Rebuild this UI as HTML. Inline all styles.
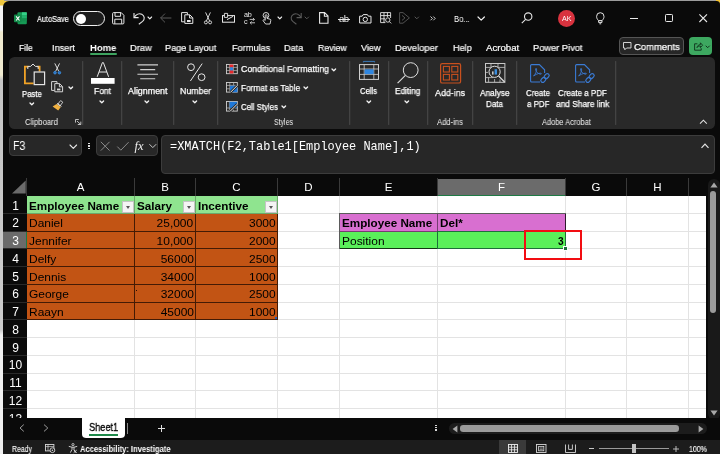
<!DOCTYPE html>
<html><head><meta charset="utf-8"><title>Excel</title>
<style>
*{box-sizing:border-box;margin:0;padding:0}
html,body{width:720px;height:454px;overflow:hidden;background:#0a0a0a}
body{position:relative;font-family:"Liberation Sans",sans-serif;color:#fff;font-size:9px}
.abs{position:absolute}
svg{overflow:visible}
.t{will-change:transform;position:absolute;white-space:nowrap;line-height:20px;transform-origin:0 0}
.box{position:absolute;background:#272727;border:1px solid #3c3c3c;border-radius:4px}
#grid{position:absolute;background:#fff;overflow:hidden}
.vl{position:absolute;top:0;width:1px;height:100%;background:#e3e3e3}
.hl{position:absolute;left:0;height:1px;width:100%;background:#e3e3e3}
.ch{will-change:transform;position:absolute;top:179px;height:17px;color:#fff;font-size:11.5px;line-height:17px;text-align:center}
.rh{will-change:transform;position:absolute;left:3px;width:25px;color:#fff;font-size:12px;line-height:18px;text-align:center}
.c{position:absolute;font-size:11.5px;line-height:18px;color:#000;white-space:nowrap;overflow:hidden;padding:0 1.5px 0 2.3px;border:1px solid rgba(25,8,0,.75);border-width:0 1px 1px 0}
.c span{will-change:transform;display:inline-block;transform-origin:0 50%;transform:scaleX(1.04)}
.c.r{text-align:right}
.c.r span{transform-origin:100% 50%}
.c.b{font-weight:bold}
.c.b span{transform:scaleX(1.015)}
.or{background:#c25414}
.gr{background:#8fe48f}
.pk{background:#d86fd0}
.lg{background:#5af05a}
.fb{position:absolute;width:12px;height:12px;background:#f4f4f4;border:1px solid #c4c4c4}
.fb i{position:absolute;left:2.5px;top:4px;border:2.5px solid transparent;border-top:3px solid #555;border-bottom:0}
</style></head><body>
<div class="abs" style="left:0;top:0;width:720px;height:454px;background:linear-gradient(#f0c840 0,#f0c840 5px,#f4f4f4 6px,#f4f4f4 30px,#f0ead0 32px,#f0ead0 75px,#c4c4c4 80px,#cccccc 330px,#f0f0f0 335px)"></div>
<div class="abs" style="left:0px;top:0px;width:720px;height:1px;background:#9c9c9c;"></div>
<div class="abs" style="left:716px;top:0px;width:4px;height:4px;background:#f0c030;"></div>
<div class="abs" style="left:0px;top:0px;width:4px;height:5px;background:#f0c840;"></div>
<div class="abs" style="left:2.6px;top:1px;width:717.4px;height:453px;background:#0a0a0a;border-top-left-radius:6px;border-top-right-radius:3.5px"></div>
<svg class="abs" style="left:13.5px;top:12px" width="13" height="12.5" viewBox="0 0 13 12.5"><rect x="3.5" y="0.3" width="9.3" height="11.9" rx="1" fill="#169a55"/>
<rect x="8" y="0.3" width="4.8" height="3" fill="#35d088"/><rect x="8" y="3.3" width="4.8" height="3" fill="#22b06c"/><rect x="8" y="6.3" width="4.8" height="3" fill="#159050"/>
<rect x="0" y="2.6" width="7.6" height="7.6" rx="0.8" fill="#138a4a"/>
<path d="M2.1 4.4 L5.5 8.5 M5.5 4.4 L2.1 8.5" stroke="#fff" stroke-width="1.1"/></svg>
<div class="t" style="left:37.00px;top:9px;font-size:8.6px;color:#fff;-webkit-text-stroke:0.2px #fff;transform:scaleX(0.851);">AutoSave</div>
<div class="abs" style="left:73px;top:11.3px;width:31.5px;height:14.5px;border:1px solid #f0f0f0;border-radius:8px;background:#1c1c1c"></div>
<div class="abs" style="left:76px;top:13.6px;width:10px;height:10px;border-radius:5px;background:#fff"></div>
<svg class="abs" style="left:112px;top:12px" width="12.5" height="12.5" viewBox="0 0 12.5 12.5"><path d="M0.6 1.6 a1 1 0 0 1 1-1 H9.2 L11.9 3.3 V10.9 a1 1 0 0 1 -1 1 H1.6 a1 1 0 0 1 -1 -1 Z" fill="none" stroke="#e8e8e8" stroke-width="1"/>
<path d="M3 0.8 V4.3 H8.6 V0.8 M2.8 11.8 V7.2 H9.7 V11.8" fill="none" stroke="#e8e8e8" stroke-width="1"/></svg>
<svg class="abs" style="left:132.5px;top:12px" width="12.5" height="12.5" viewBox="0 0 12.5 12.5"><path d="M1 1 V5.6 H5.6" fill="none" stroke="#e8e8e8" stroke-width="1.1"/><path d="M1.2 5.4 C3 2.2 6.2 1 8.8 2.2 C11.8 3.8 12 7.4 9.6 9.4 L5.8 12.2" fill="none" stroke="#e8e8e8" stroke-width="1.1"/></svg>
<svg class="abs" style="left:146.9px;top:16.3px" width="5.6" height="3.8" viewBox="0 0 5.6 3.8"><path d="M1 1 L2.8 2.8 L4.6 1" fill="none" stroke="#f0f0f0" stroke-width="1.15" stroke-linecap="round" stroke-linejoin="round"/></svg>
<svg class="abs" style="left:160px;top:13px" width="12" height="10" viewBox="0 0 12 10"><path d="M0.6 5 H11.4 M5 0.6 L0.6 5 L5 9.4" fill="none" stroke="#5a5a5a" stroke-width="1"/></svg>
<svg class="abs" style="left:180.5px;top:12.3px" width="12.5" height="12" viewBox="0 0 12.5 12"><path d="M0.6 0.6 H6.4 V2.6 M0.6 0.6 V9.8 H3.6" fill="none" stroke="#e8e8e8" stroke-width="1"/>
<path d="M3.8 2.8 H8.8 L11.8 5.8 V11.4 H3.8 Z M8.6 3 V6 H11.6" fill="none" stroke="#e8e8e8" stroke-width="1"/><path d="M6 8 H9.6 V10 H6 Z" fill="#e8e8e8"/></svg>
<svg class="abs" style="left:203.5px;top:12px" width="8" height="12.5" viewBox="0 0 8 12.5"><path d="M1.6 0.4 L5.6 9 M6.4 0.4 L2.4 9" fill="none" stroke="#e8e8e8" stroke-width="0.9"/><circle cx="1.9" cy="10.4" r="1.5" fill="none" stroke="#e8e8e8" stroke-width="0.9"/><circle cx="6.1" cy="10.4" r="1.5" fill="none" stroke="#e8e8e8" stroke-width="0.9"/></svg>
<svg class="abs" style="left:221.5px;top:12.5px" width="13" height="10" viewBox="0 0 13 10"><rect x="0.5" y="2.6" width="12" height="6.6" fill="none" stroke="#e8e8e8" stroke-width="1"/><path d="M2.4 0.4 H5.6 V4.4 H2.4 Z" fill="#0a0a0a" stroke="#e8e8e8" stroke-width="0.9"/><path d="M5 6.6 L11 3.4" stroke="#e8e8e8" stroke-width="1"/></svg>
<div class="t" style="line-height:1;left:244.3px;top:11.2px;font-size:7.2px;color:#e8e8e8;letter-spacing:-0.2px">ab</div>
<div class="t" style="line-height:1;left:244.3px;top:17.6px;font-size:7.2px;color:#e8e8e8;letter-spacing:-0.2px">c</div>
<svg class="abs" style="left:248.5px;top:17.8px" width="7" height="7" viewBox="0 0 7 7"><path d="M0.6 1.4 H5.4 L4 0 M5.4 1.4 L4 2.8 M6 4.8 H1.2 L2.6 3.4 M1.2 4.8 L2.6 6.2" fill="none" stroke="#e8e8e8" stroke-width="0.8"/></svg>
<svg class="abs" style="left:262px;top:12px" width="9.5" height="12.5" viewBox="0 0 9.5 12.5"><circle cx="4" cy="3.4" r="2.9" fill="none" stroke="#e8e8e8" stroke-width="0.9"/><path d="M3.2 8.4 V3.6 a0.9 0.9 0 0 1 1.8 0 V6.4 L8 7.2 a1 1 0 0 1 0.8 1.2 L8 12 H3.6 L1.2 8.8 a0.8 0.8 0 0 1 1.2 -1 Z" fill="#0a0a0a" stroke="#e8e8e8" stroke-width="0.9"/></svg>
<svg class="abs" style="left:276.6px;top:16.3px" width="5.6" height="3.8" viewBox="0 0 5.6 3.8"><path d="M1 1 L2.8 2.8 L4.6 1" fill="none" stroke="#f0f0f0" stroke-width="1.15" stroke-linecap="round" stroke-linejoin="round"/></svg>
<svg class="abs" style="left:290.5px;top:12px" width="11" height="12.5" viewBox="0 0 11 12.5"><path d="M10.2 1 V5.6 H5.6" fill="none" stroke="#5a5a5a" stroke-width="1.1"/><path d="M10 5.4 C8.2 2.2 5 1 2.6 2.2 C-0.4 3.8 -0.6 7.4 1.8 9.4 L5.4 12.2" fill="none" stroke="#5a5a5a" stroke-width="1.1"/></svg>
<svg class="abs" style="left:304.4px;top:16.3px" width="5.6" height="3.8" viewBox="0 0 5.6 3.8"><path d="M1 1 L2.8 2.8 L4.6 1" fill="none" stroke="#5a5a5a" stroke-width="1" stroke-linecap="round" stroke-linejoin="round"/></svg>
<svg class="abs" style="left:318.7px;top:12.3px" width="9.6" height="11.8" viewBox="0 0 9.6 11.8"><path d="M0.6 0.6 H5.6 L9 4 V11.2 H0.6 Z M5.4 0.8 V4.2 H8.8" fill="none" stroke="#e8e8e8" stroke-width="1.1"/></svg>
<div class="t" style="line-height:1;left:339.2px;top:13.5px;font-size:9.6px;color:#e8e8e8;letter-spacing:-0.6px">ab</div>
<div class="abs" style="left:338px;top:18.7px;width:12px;height:1px;background:#e8e8e8;"></div>
<svg class="abs" style="left:358.7px;top:13.6px" width="12.6" height="9.6" viewBox="0 0 12.6 9.6"><path d="M0.6 2.2 H3.2 L4.2 0.6 H8.4 L9.4 2.2 H12 V9 H0.6 Z" fill="none" stroke="#e8e8e8" stroke-width="1"/><circle cx="6.3" cy="5.4" r="2.2" fill="none" stroke="#e8e8e8" stroke-width="1"/></svg>
<svg class="abs" style="left:380px;top:12.3px" width="11.5" height="11.8" viewBox="0 0 11.5 11.8"><path d="M0.6 0.6 H10.6 V6 M0.6 0.6 V10.6 H5.4 M0.6 3.6 H10.6 M0.6 6.8 H5 M4 0.6 V10.6 M7.4 0.6 V5" fill="none" stroke="#e8e8e8" stroke-width="0.9"/><circle cx="7.8" cy="8" r="2.2" fill="none" stroke="#e8e8e8" stroke-width="0.9"/><path d="M9.4 9.6 L11.2 11.4" stroke="#e8e8e8" stroke-width="0.9"/></svg>
<svg class="abs" style="left:398.7px;top:12.3px" width="11" height="11.8" viewBox="0 0 11 11.8"><path d="M0.6 0.6 H4 L10.4 5.9 L4 11.2 H0.6 Z M3 3.4 L6 5.9 L3 8.4" fill="none" stroke="#5a5a5a" stroke-width="0.9"/></svg>
<svg class="abs" style="left:413.5px;top:16.3px" width="5.6" height="3.8" viewBox="0 0 5.6 3.8"><path d="M1 1 L2.8 2.8 L4.6 1" fill="none" stroke="#5a5a5a" stroke-width="1" stroke-linecap="round" stroke-linejoin="round"/></svg>
<svg class="abs" style="left:430px;top:16.4px" width="6" height="4.8" viewBox="0 0 6 4.8"><path d="M0.5 0.5 L2.4 2.4 L0.5 4.3 M3.3 0.5 L5.2 2.4 L3.3 4.3" fill="none" stroke="#e0e0e0" stroke-width="0.9"/></svg>
<div class="t" style="left:453.80px;top:9px;font-size:9.6px;color:#fff;transform:scaleX(0.795);">Bo...</div>
<svg class="abs" style="left:477.3px;top:16.1px" width="8.4" height="5.2" viewBox="0 0 8.4 5.2"><path d="M1 1 L4.2 4.2 L7.4 1" fill="none" stroke="#f0f0f0" stroke-width="1.2" stroke-linecap="round" stroke-linejoin="round"/></svg>
<svg class="abs" style="left:520.5px;top:12px" width="12" height="12" viewBox="0 0 12 12"><circle cx="7.2" cy="4.6" r="3.7" fill="none" stroke="#e8e8e8" stroke-width="1.1"/><path d="M4.6 7.4 L0.8 11.2" stroke="#e8e8e8" stroke-width="1.1"/></svg>
<div class="abs" style="left:557.8px;top:9.7px;width:17.2px;height:17.2px;border-radius:9px;background:#d9333f"></div>
<div class="t" style="left:561.70px;top:9px;font-size:6.9px;color:#fff;transform:scaleX(1.032);">AK</div>
<svg class="abs" style="left:596.3px;top:12.3px" width="8.6" height="12.4" viewBox="0 0 8.6 12.4"><path d="M2.5 8.6 C1.4 7.4 0.6 6.2 0.6 4.4 a3.7 3.7 0 0 1 7.4 0 C8 6.2 7.2 7.4 6.1 8.6 Z M2.6 8.8 V10.4 H6 V8.8 M3.4 11.8 H5.2" fill="none" stroke="#e8e8e8" stroke-width="1"/></svg>
<div class="abs" style="left:629.7px;top:17.8px;width:8.4px;height:1px;background:#e8e8e8;"></div>
<div class="abs" style="left:665px;top:14.3px;width:7.6px;height:7.6px;border:1px solid #e8e8e8;border-radius:1.3px"></div>
<svg class="abs" style="left:699.2px;top:14.3px" width="8.4" height="8.4" viewBox="0 0 8.4 8.4"><path d="M0.4 0.4 L8 8 M8 0.4 L0.4 8" stroke="#e8e8e8" stroke-width="1.1"/></svg>
<div class="t" style="left:18.75px;top:38px;font-size:9.6px;color:#fff;-webkit-text-stroke:0.2px #fff;transform:scaleX(0.889);">File</div>
<div class="t" style="left:52.00px;top:38px;font-size:9.6px;color:#fff;-webkit-text-stroke:0.2px #fff;transform:scaleX(0.958);">Insert</div>
<div class="t" style="left:129.50px;top:38px;font-size:9.6px;color:#fff;-webkit-text-stroke:0.2px #fff;transform:scaleX(0.971);">Draw</div>
<div class="t" style="left:165.00px;top:38px;font-size:9.6px;color:#fff;-webkit-text-stroke:0.2px #fff;transform:scaleX(0.953);">Page Layout</div>
<div class="t" style="left:231.75px;top:38px;font-size:9.6px;color:#fff;-webkit-text-stroke:0.2px #fff;transform:scaleX(0.956);">Formulas</div>
<div class="t" style="left:283.75px;top:38px;font-size:9.6px;color:#fff;-webkit-text-stroke:0.2px #fff;transform:scaleX(0.949);">Data</div>
<div class="t" style="left:317.50px;top:38px;font-size:9.6px;color:#fff;-webkit-text-stroke:0.2px #fff;transform:scaleX(0.913);">Review</div>
<div class="t" style="left:360.50px;top:38px;font-size:9.6px;color:#fff;-webkit-text-stroke:0.2px #fff;transform:scaleX(0.945);">View</div>
<div class="t" style="left:394.50px;top:38px;font-size:9.6px;color:#fff;-webkit-text-stroke:0.2px #fff;transform:scaleX(0.983);">Developer</div>
<div class="t" style="left:452.50px;top:38px;font-size:9.6px;color:#fff;-webkit-text-stroke:0.2px #fff;transform:scaleX(0.950);">Help</div>
<div class="t" style="left:485.50px;top:38px;font-size:9.6px;color:#fff;-webkit-text-stroke:0.2px #fff;transform:scaleX(1.005);">Acrobat</div>
<div class="t" style="left:533.00px;top:38px;font-size:9.6px;color:#fff;-webkit-text-stroke:0.2px #fff;transform:scaleX(0.966);">Power Pivot</div>
<div class="t" style="left:90.00px;top:38px;font-size:9.6px;color:#fff;font-weight:bold;transform:scaleX(0.986);">Home</div>
<div class="abs" style="left:90px;top:52.6px;width:26.5px;height:2px;background:#3ea35f;border-radius:1px"></div>
<div class="abs" style="left:619px;top:37px;width:64.5px;height:18px;border:1px solid #555;border-radius:4px;background:#262626"></div>
<svg class="abs" style="left:623px;top:41.6px" width="8.6" height="8.6" viewBox="0 0 8.6 8.6"><path d="M0.5 0.5 H8 V6 H3.6 L1.8 7.8 V6 H0.5 Z" fill="none" stroke="#e8e8e8" stroke-width="0.9"/></svg>
<div class="t" style="left:633.80px;top:37px;font-size:9.8px;color:#fff;-webkit-text-stroke:0.25px #fff;transform:scaleX(0.967);">Comments</div>
<div class="abs" style="left:689px;top:37px;width:23.2px;height:18px;border-radius:4px;background:#3da860"></div>
<svg class="abs" style="left:693.5px;top:41.6px" width="9" height="9" viewBox="0 0 9 9"><path d="M3.4 1.8 H0.6 V8.2 H7.2 V6.2 M3 5.6 C3.4 3.6 4.8 2.6 6.4 2.6 V0.8 L8.6 3.2 L6.4 5.6 V4 C5 4 3.8 4.4 3 5.6 Z" fill="none" stroke="#10301c" stroke-width="0.9" stroke-linejoin="round"/></svg>
<svg class="abs" style="left:704.5px;top:44.75px" width="5.4" height="3.7" viewBox="0 0 5.4 3.7"><path d="M1 1 L2.7 2.7 L4.4 1" fill="none" stroke="#10301c" stroke-width="1" stroke-linecap="round" stroke-linejoin="round"/></svg>
<div class="abs" style="left:8.6px;top:57px;width:706px;height:71.6px;background:#292929;border-radius:5.5px"></div>
<svg class="abs" style="left:82.0px;top:61px" width="1.3" height="64" viewBox="0 0 1.3 64"><rect x="0" y="0" width="1.3" height="64" fill="#434343"/></svg>
<svg class="abs" style="left:121.3px;top:61px" width="1.3" height="64" viewBox="0 0 1.3 64"><rect x="0" y="0" width="1.3" height="64" fill="#434343"/></svg>
<svg class="abs" style="left:173.2px;top:61px" width="1.3" height="64" viewBox="0 0 1.3 64"><rect x="0" y="0" width="1.3" height="64" fill="#434343"/></svg>
<svg class="abs" style="left:217.0px;top:61px" width="1.3" height="64" viewBox="0 0 1.3 64"><rect x="0" y="0" width="1.3" height="64" fill="#434343"/></svg>
<svg class="abs" style="left:348.9px;top:61px" width="1.3" height="64" viewBox="0 0 1.3 64"><rect x="0" y="0" width="1.3" height="64" fill="#434343"/></svg>
<svg class="abs" style="left:388.2px;top:61px" width="1.3" height="64" viewBox="0 0 1.3 64"><rect x="0" y="0" width="1.3" height="64" fill="#434343"/></svg>
<svg class="abs" style="left:426.8px;top:61px" width="1.3" height="64" viewBox="0 0 1.3 64"><rect x="0" y="0" width="1.3" height="64" fill="#434343"/></svg>
<svg class="abs" style="left:472.0px;top:61px" width="1.3" height="64" viewBox="0 0 1.3 64"><rect x="0" y="0" width="1.3" height="64" fill="#434343"/></svg>
<svg class="abs" style="left:515.8px;top:61px" width="1.3" height="64" viewBox="0 0 1.3 64"><rect x="0" y="0" width="1.3" height="64" fill="#434343"/></svg>
<svg class="abs" style="left:615.3px;top:61px" width="1.3" height="64" viewBox="0 0 1.3 64"><rect x="0" y="0" width="1.3" height="64" fill="#434343"/></svg>
<svg class="abs" style="left:23.5px;top:62px" width="21.5" height="23.5" viewBox="0 0 21.5 23.5"><path d="M4.4 4.6 H0.9 V21.4 H9.6 M13.6 4.6 H15.6 V9.4" fill="none" stroke="#f0a226" stroke-width="1.8"/>
<path d="M3.8 7 V4.4 H6.6 L9 2 L11.4 4.4 H14.2 V7" fill="none" stroke="#e4e4e4" stroke-width="1"/>
<rect x="10.2" y="10" width="10.4" height="12.6" fill="#2e2e2e" stroke="#e4e4e4" stroke-width="1.2"/></svg>
<div class="t" style="left:22.30px;top:84px;font-size:8.9px;color:#fff;-webkit-text-stroke:0.25px #fff;transform:scaleX(0.874);">Paste</div>
<svg class="abs" style="left:29.1px;top:102.4px" width="5.6" height="3.8" viewBox="0 0 5.6 3.8"><path d="M1 1 L2.8 2.8 L4.6 1" fill="none" stroke="#f4f4f4" stroke-width="1.3" stroke-linecap="round" stroke-linejoin="round"/></svg>
<svg class="abs" style="left:53.2px;top:63.2px" width="8.4" height="11.6" viewBox="0 0 8.4 11.6"><path d="M1.8 0.4 L5.6 8 M6.6 0.4 L2.8 8" fill="none" stroke="#ececec" stroke-width="0.9"/><circle cx="2" cy="9.7" r="1.3" fill="#2b6cb8" stroke="#3b8ee0" stroke-width="0.9"/><circle cx="6.4" cy="9.7" r="1.3" fill="#2b6cb8" stroke="#3b8ee0" stroke-width="0.9"/></svg>
<svg class="abs" style="left:51px;top:81.4px" width="12.2" height="11.4" viewBox="0 0 12.2 11.4"><path d="M0.6 0.6 H6 V2.4 M0.6 0.6 V9.4 H3.4" fill="none" stroke="#d8d8d8" stroke-width="1"/>
<path d="M3.8 2.6 H8.6 L11.6 5.6 V10.8 H3.8 Z M8.4 2.8 V5.8 H11.4" fill="none" stroke="#d8d8d8" stroke-width="1"/><path d="M6 7.6 H9.4 V9.4 H6 Z" fill="#d8d8d8"/></svg>
<svg class="abs" style="left:68.0px;top:85.9px" width="5.6" height="3.8" viewBox="0 0 5.6 3.8"><path d="M1 1 L2.8 2.8 L4.6 1" fill="none" stroke="#f4f4f4" stroke-width="1.3" stroke-linecap="round" stroke-linejoin="round"/></svg>
<svg class="abs" style="left:51.5px;top:99.8px" width="11.6" height="11.2" viewBox="0 0 11.6 11.2"><path d="M8.6 0.6 L10.8 2.2 L8 6 L5.6 4.4 Z" fill="none" stroke="#d8d8d8" stroke-width="0.9"/><path d="M4.6 4 L8.8 7 L6.2 10.6 L0.6 6.4 Z" fill="#f0b040"/><path d="M5.2 3.4 L9.4 6.4" stroke="#e8e8e8" stroke-width="1"/></svg>
<div class="t" style="left:24.80px;top:113px;font-size:8.2px;color:#f4f4f4;transform:scaleX(0.940);">Clipboard</div>
<svg class="abs" style="left:74.5px;top:119px" width="6.5" height="6" viewBox="0 0 6.5 6"><path d="M0.5 3.6 V0.5 H3.8 M2 2 L5.6 5.4 M5.8 2.6 V5.5 H2.8" fill="none" stroke="#d0d0d0" stroke-width="0.9"/></svg>
<svg class="abs" style="left:90.8px;top:62px" width="24" height="22" viewBox="0 0 24 22"><path d="M6.2 14.8 L11.4 0.6 H12.4 L17.6 14.8 M8 10 H15.8" fill="none" stroke="#e8e8e8" stroke-width="1"/><rect x="0" y="16" width="23.6" height="5.8" fill="#fff"/></svg>
<div class="t" style="left:94.20px;top:81px;font-size:8.9px;color:#fff;-webkit-text-stroke:0.25px #fff;transform:scaleX(0.957);">Font</div>
<svg class="abs" style="left:99.1px;top:100.1px" width="5.6" height="3.8" viewBox="0 0 5.6 3.8"><path d="M1 1 L2.8 2.8 L4.6 1" fill="none" stroke="#f4f4f4" stroke-width="1.3" stroke-linecap="round" stroke-linejoin="round"/></svg>
<svg class="abs" style="left:137px;top:63.5px" width="22" height="16" viewBox="0 0 22 16"><path d="M0.4 0.9 H21 M3.2 5.6 H18.2 M0.4 10.2 H21 M3.2 14.8 H18.2" fill="none" stroke="#cfcfcf" stroke-width="1.1"/></svg>
<div class="t" style="left:127.90px;top:81px;font-size:8.9px;color:#fff;-webkit-text-stroke:0.25px #fff;transform:scaleX(1.001);">Alignment</div>
<svg class="abs" style="left:144.3px;top:100.1px" width="5.6" height="3.8" viewBox="0 0 5.6 3.8"><path d="M1 1 L2.8 2.8 L4.6 1" fill="none" stroke="#f4f4f4" stroke-width="1.3" stroke-linecap="round" stroke-linejoin="round"/></svg>
<svg class="abs" style="left:186.5px;top:62.6px" width="19" height="18.6" viewBox="0 0 19 18.6"><circle cx="4" cy="4.2" r="3.4" fill="none" stroke="#e8e8e8" stroke-width="1"/><circle cx="14.6" cy="14.2" r="3.4" fill="none" stroke="#e8e8e8" stroke-width="1"/><path d="M15.2 0.6 L3.4 18" stroke="#e8e8e8" stroke-width="1"/></svg>
<div class="t" style="left:180.00px;top:81px;font-size:8.9px;color:#fff;-webkit-text-stroke:0.25px #fff;transform:scaleX(0.987);">Number</div>
<svg class="abs" style="left:192.4px;top:100.1px" width="5.6" height="3.8" viewBox="0 0 5.6 3.8"><path d="M1 1 L2.8 2.8 L4.6 1" fill="none" stroke="#f4f4f4" stroke-width="1.3" stroke-linecap="round" stroke-linejoin="round"/></svg>
<svg class="abs" style="left:226.3px;top:63.6px" width="11.8" height="10.2" viewBox="0 0 11.8 10.2"><rect x="0.5" y="0.5" width="10.8" height="9.2" fill="none" stroke="#d0d0d0" stroke-width="0.9"/><path d="M3.6 0.5 V9.7 M7.4 0.5 V9.7 M0.5 3.4 H11.3 M0.5 6.6 H11.3" stroke="#c0c0c0" stroke-width="0.7"/><rect x="3.6" y="0.6" width="3.8" height="2.8" fill="#e8282a"/><rect x="4" y="3.4" width="3" height="3.2" fill="#2f86e0"/><rect x="3.6" y="6.6" width="3.8" height="2.9" fill="#e8282a"/></svg>
<div class="t" style="left:241.00px;top:59px;font-size:8.9px;color:#fff;-webkit-text-stroke:0.25px #fff;transform:scaleX(0.985);">Conditional Formatting</div>
<svg class="abs" style="left:331.4px;top:67.5px" width="5.6" height="3.8" viewBox="0 0 5.6 3.8"><path d="M1 1 L2.8 2.8 L4.6 1" fill="none" stroke="#f4f4f4" stroke-width="1.3" stroke-linecap="round" stroke-linejoin="round"/></svg>
<svg class="abs" style="left:226.3px;top:82.4px" width="11.8" height="10.6" viewBox="0 0 11.8 10.6"><rect x="0.5" y="0.5" width="10.8" height="9.6" fill="none" stroke="#d0d0d0" stroke-width="0.9"/><path d="M3.8 0.5 V10 M7.6 0.5 V3.4 M0.5 3.4 H11.3 M0.5 6.8 H3.8" stroke="#c0c0c0" stroke-width="0.7"/><rect x="4" y="3.8" width="7.4" height="6.4" fill="#1f78d8"/><path d="M4.4 10.4 L11.4 3.4" stroke="#292929" stroke-width="2.6"/><path d="M4.6 10.2 L11.4 3.4" stroke="#e8e8e8" stroke-width="1"/></svg>
<div class="t" style="left:241.00px;top:78px;font-size:8.9px;color:#fff;-webkit-text-stroke:0.25px #fff;transform:scaleX(0.933);">Format as Table</div>
<svg class="abs" style="left:302.8px;top:86.3px" width="5.6" height="3.8" viewBox="0 0 5.6 3.8"><path d="M1 1 L2.8 2.8 L4.6 1" fill="none" stroke="#f4f4f4" stroke-width="1.3" stroke-linecap="round" stroke-linejoin="round"/></svg>
<svg class="abs" style="left:226.3px;top:101.4px" width="11.8" height="10.6" viewBox="0 0 11.8 10.6"><rect x="0.5" y="0.5" width="10.8" height="9.6" fill="none" stroke="#d0d0d0" stroke-width="0.9"/><path d="M3.4 0.5 V10 M0.5 7 H11.3 M7.4 7 V10" stroke="#c0c0c0" stroke-width="0.7"/><rect x="3.6" y="0.8" width="7.4" height="6" fill="#1f78d8"/><path d="M4 10.4 L11.2 3.2" stroke="#292929" stroke-width="2.6"/><path d="M4.2 10.2 L11.2 3.2" stroke="#e8e8e8" stroke-width="1"/></svg>
<div class="t" style="left:241.00px;top:97px;font-size:8.9px;color:#fff;-webkit-text-stroke:0.25px #fff;transform:scaleX(0.882);">Cell Styles</div>
<svg class="abs" style="left:280.5px;top:104.9px" width="5.6" height="3.8" viewBox="0 0 5.6 3.8"><path d="M1 1 L2.8 2.8 L4.6 1" fill="none" stroke="#f4f4f4" stroke-width="1.3" stroke-linecap="round" stroke-linejoin="round"/></svg>
<div class="t" style="left:273.75px;top:113px;font-size:8.2px;color:#f4f4f4;transform:scaleX(0.849);">Styles</div>
<svg class="abs" style="left:359px;top:61px" width="20" height="19" viewBox="0 0 20 19"><path d="M4.4 1.4 V0.4 H15.6 V1.4" fill="none" stroke="#3b8ee0" stroke-width="0.8"/><rect x="0.5" y="3.6" width="19" height="14.8" fill="none" stroke="#d0d0d0" stroke-width="1"/><path d="M5.2 3.6 V18.4 M14.8 3.6 V18.4 M0.5 8 H19.5 M0.5 13.4 H19.5" stroke="#d0d0d0" stroke-width="0.8"/><rect x="5.6" y="8.3" width="9" height="4.8" fill="#2f86e0"/></svg>
<div class="t" style="left:360.20px;top:81px;font-size:8.9px;color:#fff;-webkit-text-stroke:0.25px #fff;transform:scaleX(0.864);">Cells</div>
<svg class="abs" style="left:365.7px;top:100.1px" width="5.6" height="3.8" viewBox="0 0 5.6 3.8"><path d="M1 1 L2.8 2.8 L4.6 1" fill="none" stroke="#f4f4f4" stroke-width="1.3" stroke-linecap="round" stroke-linejoin="round"/></svg>
<svg class="abs" style="left:396.5px;top:61.5px" width="22" height="22" viewBox="0 0 22 22"><circle cx="13.7" cy="8.1" r="7.4" fill="none" stroke="#e0e0e0" stroke-width="1"/><path d="M8.4 13.4 L0.6 21.2" stroke="#e0e0e0" stroke-width="1.1"/></svg>
<div class="t" style="left:394.60px;top:81px;font-size:8.9px;color:#fff;-webkit-text-stroke:0.25px #fff;transform:scaleX(0.933);">Editing</div>
<svg class="abs" style="left:404.2px;top:100.1px" width="5.6" height="3.8" viewBox="0 0 5.6 3.8"><path d="M1 1 L2.8 2.8 L4.6 1" fill="none" stroke="#f4f4f4" stroke-width="1.3" stroke-linecap="round" stroke-linejoin="round"/></svg>
<svg class="abs" style="left:439.6px;top:62.8px" width="21.2" height="20.6" viewBox="0 0 21.2 20.6"><rect x="0.6" y="0.6" width="20" height="19.4" rx="1.6" fill="none" stroke="#c8501e" stroke-width="1.2"/><rect x="3.4" y="3.4" width="6" height="5.6" fill="none" stroke="#c8501e" stroke-width="1.1"/><rect x="11.8" y="3.4" width="6" height="5.6" fill="none" stroke="#c8501e" stroke-width="1.1"/><rect x="3.4" y="11.4" width="6" height="5.6" fill="none" stroke="#c8501e" stroke-width="1.1"/><rect x="11.8" y="11.4" width="6" height="5.6" fill="none" stroke="#c8501e" stroke-width="1.1"/></svg>
<div class="t" style="left:435.00px;top:83px;font-size:9.2px;color:#fff;-webkit-text-stroke:0.25px #fff;transform:scaleX(0.968);">Add-ins</div>
<div class="t" style="left:436.70px;top:113px;font-size:8.2px;color:#f4f4f4;transform:scaleX(0.935);">Add-ins</div>
<svg class="abs" style="left:484.5px;top:63.2px" width="20.6" height="20" viewBox="0 0 20.6 20"><rect x="0.5" y="0.5" width="19.4" height="18.8" fill="none" stroke="#c8c8c8" stroke-width="1"/><path d="M0.5 4.4 H19.9 M0.5 14.6 H8 M6 0.5 V4.4 M13 0.5 V4.4 M3.6 14.6 V19.3 M9.6 16 V19.3 M15 16.4 V19.3 M0.5 9.4 H3" stroke="#c8c8c8" stroke-width="0.8"/><circle cx="9.6" cy="8.8" r="5.6" fill="#292929" stroke="#e0e0e0" stroke-width="1"/><rect x="9.6" y="6.2" width="2.4" height="5.4" fill="#3b8ee0"/><rect x="7" y="8.4" width="1.6" height="3.2" fill="#c8c8c8"/><path d="M13.6 13 L19.6 19" stroke="#e0e0e0" stroke-width="1.2"/></svg>
<div class="t" style="left:480.00px;top:83px;font-size:8.9px;color:#fff;-webkit-text-stroke:0.25px #fff;transform:scaleX(0.935);">Analyse</div>
<div class="t" style="left:486.25px;top:94px;font-size:8.9px;color:#fff;-webkit-text-stroke:0.25px #fff;transform:scaleX(0.907);">Data</div>
<svg class="abs" style="left:530.2px;top:64.2px" width="20.5" height="20" viewBox="0 0 20.5 20"><path d="M10 18 H1.6 a1 1 0 0 1 -1 -1 V1.6 a1 1 0 0 1 1 -1 H9.4 L14.6 5.8 V9" fill="none" stroke="#3a7bd5" stroke-width="1.1"/><path d="M3.6 12 C5.6 10 7 6.6 6.6 4.8 C6.2 3.8 5.2 4.4 5.6 5.8 C6.2 8 8.4 10 10.6 10.2 C12 10.2 11.6 9 10.2 9.2 C8 9.4 5.4 10.6 3.6 12 Z" fill="none" stroke="#3a7bd5" stroke-width="0.9"/><g fill="none" stroke="#3a7bd5" stroke-width="1.2"><rect x="14" y="10.2" width="5.4" height="3.8" rx="1.9" transform="rotate(-45 16.7 12.1)"/><rect x="10.6" y="14" width="5.4" height="3.8" rx="1.9" transform="rotate(-45 13.3 15.9)"/></g></svg>
<div class="t" style="left:525.80px;top:83px;font-size:8.9px;color:#fff;-webkit-text-stroke:0.25px #fff;transform:scaleX(0.899);">Create</div>
<div class="t" style="left:526.70px;top:94px;font-size:8.9px;color:#fff;-webkit-text-stroke:0.25px #fff;transform:scaleX(0.892);">a PDF</div>
<svg class="abs" style="left:575px;top:64.2px" width="20.5" height="20" viewBox="0 0 20.5 20"><path d="M10 18 H1.6 a1 1 0 0 1 -1 -1 V1.6 a1 1 0 0 1 1 -1 H9.4 L14.6 5.8 V9" fill="none" stroke="#3a7bd5" stroke-width="1.1"/><path d="M3.6 12 C5.6 10 7 6.6 6.6 4.8 C6.2 3.8 5.2 4.4 5.6 5.8 C6.2 8 8.4 10 10.6 10.2 C12 10.2 11.6 9 10.2 9.2 C8 9.4 5.4 10.6 3.6 12 Z" fill="none" stroke="#3a7bd5" stroke-width="0.9"/><g fill="none" stroke="#3a7bd5" stroke-width="1.2"><rect x="14" y="10.2" width="5.4" height="3.8" rx="1.9" transform="rotate(-45 16.7 12.1)"/><rect x="10.6" y="14" width="5.4" height="3.8" rx="1.9" transform="rotate(-45 13.3 15.9)"/></g></svg>
<div class="t" style="left:557.50px;top:83px;font-size:8.9px;color:#fff;-webkit-text-stroke:0.25px #fff;transform:scaleX(0.901);">Create a PDF</div>
<div class="t" style="left:555.80px;top:94px;font-size:8.9px;color:#fff;-webkit-text-stroke:0.25px #fff;transform:scaleX(0.939);">and Share link</div>
<div class="t" style="left:541.90px;top:113px;font-size:8.2px;color:#f4f4f4;transform:scaleX(0.909);">Adobe Acrobat</div>
<svg class="abs" style="left:699px;top:118.5px" width="9" height="6" viewBox="0 0 9 6"><path d="M1 4.6 L4.4 1.2 L7.8 4.6" fill="none" stroke="#e0e0e0" stroke-width="1.1"/></svg>
<div class="box" style="left:9px;top:135px;width:72.5px;height:21px"></div>
<div class="t" style="left:12.60px;top:136px;font-size:12px;color:#fff;transform:scaleX(0.886);">F3</div>
<svg class="abs" style="left:69.3px;top:143.55px" width="8.6" height="5.3" viewBox="0 0 8.6 5.3"><path d="M1 1 L4.3 4.3 L7.6 1" fill="none" stroke="#e8e8e8" stroke-width="1.1" stroke-linecap="round" stroke-linejoin="round"/></svg>
<div class="abs" style="left:88.4px;top:142.6px;width:1.6px;height:1.6px;background:#e0e0e0;"></div>
<div class="abs" style="left:88.4px;top:145.2px;width:1.6px;height:1.6px;background:#e0e0e0;"></div>
<div class="abs" style="left:88.4px;top:147.8px;width:1.6px;height:1.6px;background:#e0e0e0;"></div>
<div class="box" style="left:96px;top:135px;width:61.5px;height:21px"></div>
<svg class="abs" style="left:96px;top:135.5px" width="62" height="21" viewBox="0 0 62 21"><path d="M4.8 5.8 L13.6 14.6 M13.6 5.8 L4.8 14.6" fill="none" stroke="#8a8a8a" stroke-width="1"/>
<path d="M21.3 10.6 L24.8 14.2 L32.6 6.2" fill="none" stroke="#8a8a8a" stroke-width="1"/>
<path d="M53.4 8.2 L56.8 11.6 L60.2 8.2" fill="none" stroke="#c8c8c8" stroke-width="1"/>
<text x="38.6" y="14.3" font-family="Liberation Serif, serif" font-style="italic" font-size="12.5" fill="#f0f0f0">fx</text></svg>
<div class="box" style="left:160.5px;top:135px;width:554px;height:38.5px"></div>
<div class="t" style="line-height:1;left:169.6px;top:141.8px;font-size:11.95px;color:#fff;font-family:'Liberation Mono',monospace">=XMATCH(F2,Table1[Employee Name],1)</div>
<svg class="abs" style="left:699px;top:141px" width="12" height="10" viewBox="0 0 12 10"><path d="M2.5 6.8 L6 3.2 L9.5 6.8" fill="none" stroke="#e6e6e6" stroke-width="1.2"/></svg>
<svg class="abs" style="left:11px;top:180px" width="16" height="15" viewBox="0 0 16 15"><path d="M14.7 0.5 L14.7 13.5 L1 13.5 Z" fill="#6b6b6b"/></svg>
<div class="abs" style="left:437px;top:178.5px;width:129px;height:17.5px;background:#6b6b6b;"></div>
<div class="abs" style="left:437px;top:194.5px;width:129px;height:2px;background:#1e7a45;"></div>
<div class="ch" style="left:27px;width:107px">A</div>
<div class="ch" style="left:135px;width:60px">B</div>
<div class="ch" style="left:196px;width:81px">C</div>
<div class="ch" style="left:278px;width:61px">D</div>
<div class="ch" style="left:340px;width:97px">E</div>
<div class="ch" style="left:438px;width:127px">F</div>
<div class="ch" style="left:566px;width:60px">G</div>
<div class="ch" style="left:627px;width:61px">H</div>
<div class="abs" style="left:26px;top:178px;width:1px;height:18px;background:#3a3a3a;"></div>
<div class="abs" style="left:134px;top:178px;width:1px;height:18px;background:#3a3a3a;"></div>
<div class="abs" style="left:195px;top:178px;width:1px;height:18px;background:#3a3a3a;"></div>
<div class="abs" style="left:277px;top:178px;width:1px;height:18px;background:#3a3a3a;"></div>
<div class="abs" style="left:339px;top:178px;width:1px;height:18px;background:#3a3a3a;"></div>
<div class="abs" style="left:437px;top:178px;width:1px;height:18px;background:#3a3a3a;"></div>
<div class="abs" style="left:565px;top:178px;width:1px;height:18px;background:#3a3a3a;"></div>
<div class="abs" style="left:626px;top:178px;width:1px;height:18px;background:#3a3a3a;"></div>
<div class="abs" style="left:688px;top:178px;width:1px;height:18px;background:#3a3a3a;"></div>
<div class="abs" style="left:2.5px;top:232px;width:24.5px;height:17px;background:#6b6b6b;"></div>
<div class="abs" style="left:26px;top:232px;width:2px;height:17px;background:#1e7a45;"></div>
<div class="rh" style="top:196px;height:18px;overflow:hidden;padding-top:1px">1</div>
<div class="rh" style="top:214px;height:18px;overflow:hidden;padding-top:0px">2</div>
<div class="abs" style="left:2.5px;top:213px;width:24.5px;height:1px;background:#2a2a2a;"></div>
<div class="rh" style="top:232px;height:17px;overflow:hidden;padding-top:0px">3</div>
<div class="abs" style="left:2.5px;top:231px;width:24.5px;height:1px;background:#2a2a2a;"></div>
<div class="rh" style="top:249px;height:18px;overflow:hidden;padding-top:1px">4</div>
<div class="abs" style="left:2.5px;top:248px;width:24.5px;height:1px;background:#2a2a2a;"></div>
<div class="rh" style="top:267px;height:18px;overflow:hidden;padding-top:1px">5</div>
<div class="abs" style="left:2.5px;top:266px;width:24.5px;height:1px;background:#2a2a2a;"></div>
<div class="rh" style="top:285px;height:18px;overflow:hidden;padding-top:0px">6</div>
<div class="abs" style="left:2.5px;top:284px;width:24.5px;height:1px;background:#2a2a2a;"></div>
<div class="rh" style="top:303px;height:17px;overflow:hidden;padding-top:0px">7</div>
<div class="abs" style="left:2.5px;top:302px;width:24.5px;height:1px;background:#2a2a2a;"></div>
<div class="rh" style="top:320px;height:18px;overflow:hidden;padding-top:1px">8</div>
<div class="abs" style="left:2.5px;top:319px;width:24.5px;height:1px;background:#2a2a2a;"></div>
<div class="rh" style="top:338px;height:18px;overflow:hidden;padding-top:1px">9</div>
<div class="abs" style="left:2.5px;top:337px;width:24.5px;height:1px;background:#2a2a2a;"></div>
<div class="rh" style="top:356px;height:18px;overflow:hidden;padding-top:0px">10</div>
<div class="abs" style="left:2.5px;top:355px;width:24.5px;height:1px;background:#2a2a2a;"></div>
<div class="rh" style="top:374px;height:17px;overflow:hidden;padding-top:0px">11</div>
<div class="abs" style="left:2.5px;top:373px;width:24.5px;height:1px;background:#2a2a2a;"></div>
<div class="rh" style="top:391px;height:18px;overflow:hidden;padding-top:1px">12</div>
<div class="abs" style="left:2.5px;top:390px;width:24.5px;height:1px;background:#2a2a2a;"></div>
<div class="rh" style="top:409px;height:9px;overflow:hidden;padding-top:1px">13</div>
<div class="abs" style="left:2.5px;top:408px;width:24.5px;height:1px;background:#2a2a2a;"></div>
<div id="grid" style="left:27px;top:196px;width:679px;height:222px">
<div class="vl" style="left:107px"></div>
<div class="vl" style="left:168px"></div>
<div class="vl" style="left:250px"></div>
<div class="vl" style="left:312px"></div>
<div class="vl" style="left:410px"></div>
<div class="vl" style="left:538px"></div>
<div class="vl" style="left:599px"></div>
<div class="vl" style="left:661px"></div>
<div class="hl" style="top:17px"></div>
<div class="hl" style="top:35px"></div>
<div class="hl" style="top:52px"></div>
<div class="hl" style="top:70px"></div>
<div class="hl" style="top:88px"></div>
<div class="hl" style="top:106px"></div>
<div class="hl" style="top:123px"></div>
<div class="hl" style="top:141px"></div>
<div class="hl" style="top:159px"></div>
<div class="hl" style="top:177px"></div>
<div class="hl" style="top:194px"></div>
<div class="hl" style="top:212px"></div>
<div class="c gr b" style="left:0px;top:0px;width:108px;height:18px;padding-top:1px;border-color:rgba(40,60,40,.35)"><span>Employee Name</span></div>
<div class="fb" style="left:95px;top:5px"><i></i></div>
<div class="c gr b" style="left:108px;top:0px;width:61px;height:18px;padding-top:1px;border-color:rgba(40,60,40,.35)"><span>Salary</span></div>
<div class="fb" style="left:156px;top:5px"><i></i></div>
<div class="c gr b" style="left:169px;top:0px;width:82px;height:18px;padding-top:1px;border-color:rgba(40,60,40,.35)"><span>Incentive</span></div>
<div class="fb" style="left:238px;top:5px"><i></i></div>
<div class="c or" style="left:0px;top:18px;width:108px;height:18px;padding-top:0px;"><span>Daniel</span></div>
<div class="c or r" style="left:108px;top:18px;width:61px;height:18px;padding-top:0px;"><span>25,000</span></div>
<div class="c or r" style="left:169px;top:18px;width:82px;height:18px;padding-top:0px;"><span>3000</span></div>
<div class="c or" style="left:0px;top:36px;width:108px;height:17px;padding-top:0px;"><span>Jennifer</span></div>
<div class="c or r" style="left:108px;top:36px;width:61px;height:17px;padding-top:0px;"><span>10,000</span></div>
<div class="c or r" style="left:169px;top:36px;width:82px;height:17px;padding-top:0px;"><span>2000</span></div>
<div class="c or" style="left:0px;top:53px;width:108px;height:18px;padding-top:1px;"><span>Delfy</span></div>
<div class="c or r" style="left:108px;top:53px;width:61px;height:18px;padding-top:1px;"><span>56000</span></div>
<div class="c or r" style="left:169px;top:53px;width:82px;height:18px;padding-top:1px;"><span>2500</span></div>
<div class="c or" style="left:0px;top:71px;width:108px;height:18px;padding-top:1px;"><span>Dennis</span></div>
<div class="c or r" style="left:108px;top:71px;width:61px;height:18px;padding-top:1px;"><span>34000</span></div>
<div class="c or r" style="left:169px;top:71px;width:82px;height:18px;padding-top:1px;"><span>1000</span></div>
<div class="c or" style="left:0px;top:89px;width:108px;height:18px;padding-top:0px;"><span>George</span></div>
<div class="c or r" style="left:108px;top:89px;width:61px;height:18px;padding-top:0px;"><span>32000</span></div>
<div class="c or r" style="left:169px;top:89px;width:82px;height:18px;padding-top:0px;"><span>2500</span></div>
<div class="c or" style="left:0px;top:107px;width:108px;height:17px;padding-top:0px;"><span>Raayn</span></div>
<div class="c or r" style="left:108px;top:107px;width:61px;height:17px;padding-top:0px;"><span>45000</span></div>
<div class="c or r" style="left:169px;top:107px;width:82px;height:17px;padding-top:0px;"><span>1000</span></div>
<div class="c pk b" style="left:313px;top:18px;width:98px;height:18px;padding-top:0px;border-color:rgba(0,0,0,.45)"><span>Employee Name</span></div>
<div class="c pk b" style="left:411px;top:18px;width:128px;height:18px;padding-top:0px;border-color:rgba(0,0,0,.45)"><span>Del*</span></div>
<div class="c lg" style="left:313px;top:36px;width:98px;height:17px;padding-top:0px;border-color:rgba(0,0,0,.45)"><span>Position</span></div>
<div class="c lg r b" style="left:411px;top:36px;width:128px;height:17px;padding-top:0px;font-size:10px;padding-right:1.5px;line-height:20px"><span>3</span></div>
<div class="abs" style="left:109px;top:93.80000000000001px;width:1.2px;height:1.2px;background:#2a0f00;"></div>
<div class="abs" style="left:312px;top:17px;width:227px;height:36px;border:1px solid rgba(0,0,0,.6)"></div>
<div class="abs" style="left:248px;top:121px;width:2px;height:2px;background:#2a5db0;"></div>
<div class="abs" style="left:410px;top:35px;width:129px;height:18px;border:1px solid #1e6e3c"></div>
<div class="abs" style="left:536.5px;top:50.5px;width:3.4px;height:3.4px;background:#1e6e3c;outline:0.6px solid #fff"></div>
<div class="abs" style="left:497.1px;top:34px;width:57.6px;height:30px;border:2px solid #f20d12"></div>
</div>
<div class="abs" style="left:707.5px;top:178.5px;width:12px;height:241px;background:#191919;border-radius:6px"></div>
<div class="abs" style="left:710.3px;top:190.5px;width:6.2px;height:122.5px;background:#9b9b9b;border-radius:3px"></div>
<svg class="abs" style="left:709.5px;top:181.5px" width="8" height="6" viewBox="0 0 8 6"><path d="M4 0.6 L7.6 5.4 H0.4 Z" fill="#a8a8a8"/></svg>
<svg class="abs" style="left:709.5px;top:409.5px" width="8" height="6" viewBox="0 0 8 6"><path d="M4 5.4 L7.6 0.6 H0.4 Z" fill="#a8a8a8"/></svg>
<div class="abs" style="left:2.5px;top:418px;width:717.5px;height:22px;background:#0a0a0a;"></div>
<svg class="abs" style="left:18.5px;top:423.5px" width="6" height="8" viewBox="0 0 6 8"><path d="M4.8 0.6 L1 4 L4.8 7.4" fill="none" stroke="#9a9a9a" stroke-width="1"/></svg>
<svg class="abs" style="left:42.5px;top:423.5px" width="6" height="8" viewBox="0 0 6 8"><path d="M1 0.6 L4.8 4 L1 7.4" fill="none" stroke="#9a9a9a" stroke-width="1"/></svg>
<div class="abs" style="left:81.5px;top:418px;width:43.5px;height:19.6px;background:#fff;border-radius:0 0 4px 4px"></div>
<div class="t" style="left:88.60px;top:417px;font-size:11.5px;color:#000;-webkit-text-stroke:0.35px #000;transform:scaleX(0.801);">Sheet1</div>
<div class="abs" style="left:88.6px;top:433.5px;width:29px;height:2px;background:#1e8a4a;"></div>
<div class="abs" style="left:127.3px;top:423px;width:1px;height:10.5px;background:#8a8a8a;"></div>
<svg class="abs" style="left:157.5px;top:424.5px" width="7" height="7" viewBox="0 0 7 7"><path d="M3.5 0 V7 M0 3.5 H7" stroke="#e0e0e0" stroke-width="1"/></svg>
<div class="abs" style="left:435.4px;top:424.6px;width:1.4px;height:1.4px;background:#d8d8d8;"></div>
<div class="abs" style="left:435.4px;top:427px;width:1.4px;height:1.4px;background:#d8d8d8;"></div>
<div class="abs" style="left:435.4px;top:429.4px;width:1.4px;height:1.4px;background:#d8d8d8;"></div>
<div class="abs" style="left:449px;top:422.5px;width:258px;height:11.5px;background:#1c1c1c;border-radius:6px"></div>
<div class="abs" style="left:460px;top:425.3px;width:219px;height:6.4px;background:#9b9b9b;border-radius:3.2px"></div>
<svg class="abs" style="left:451.5px;top:424.5px" width="6" height="8" viewBox="0 0 6 8"><path d="M0.6 4 L5.4 0.4 V7.6 Z" fill="#a8a8a8"/></svg>
<svg class="abs" style="left:698px;top:424.5px" width="6" height="8" viewBox="0 0 6 8"><path d="M5.4 4 L0.6 0.4 V7.6 Z" fill="#a8a8a8"/></svg>
<div class="abs" style="left:2.5px;top:439.5px;width:717.5px;height:14.5px;background:#1c1c1c;"></div>
<div class="t" style="left:11.60px;top:439px;font-size:8.6px;color:#f4f4f4;-webkit-text-stroke:0.15px #f4f4f4;transform:scaleX(0.805);">Ready</div>
<svg class="abs" style="left:45px;top:443.5px" width="10.5" height="9" viewBox="0 0 10.5 9"><rect x="0.5" y="0.5" width="8.4" height="6.4" fill="none" stroke="#d8d8d8" stroke-width="0.9"/><path d="M0.5 2.6 H8.9 M3 0.5 V6.9" stroke="#d8d8d8" stroke-width="0.7"/><circle cx="7.4" cy="6.2" r="2.4" fill="#1c1c1c" stroke="#d8d8d8" stroke-width="0.9"/><circle cx="7.4" cy="6.2" r="0.8" fill="#d8d8d8"/></svg>
<svg class="abs" style="left:67.5px;top:443px" width="10" height="10" viewBox="0 0 10 10"><circle cx="5" cy="1.6" r="1.1" fill="none" stroke="#e0e0e0" stroke-width="0.8"/><path d="M0.8 3.4 L4 4.2 H6 L9.2 3.4 M4 4.2 V6.4 L2.4 9.6 M6 4.2 V6.4 L7.6 9.6" fill="none" stroke="#e0e0e0" stroke-width="0.9"/><path d="M5.6 7 L8.8 9.8 M8.8 7 L5.6 9.8" stroke="#e0e0e0" stroke-width="0.8"/></svg>
<div class="t" style="left:80.00px;top:439px;font-size:8.6px;color:#fff;font-weight:bold;transform:scaleX(0.881);">Accessibility: Investigate</div>
<div class="abs" style="left:499px;top:439.5px;width:27px;height:14.5px;background:#3a3a3a;"></div>
<svg class="abs" style="left:507.5px;top:443.5px" width="10" height="9" viewBox="0 0 10 9"><rect x="0.5" y="0.5" width="9" height="8" fill="none" stroke="#f0f0f0" stroke-width="0.9"/><path d="M3.5 0.5 V8.5 M6.5 0.5 V8.5 M0.5 3.2 H9.5 M0.5 5.8 H9.5" stroke="#f0f0f0" stroke-width="0.8"/></svg>
<svg class="abs" style="left:536px;top:443.5px" width="10.5" height="9" viewBox="0 0 10.5 9"><rect x="0.5" y="0.5" width="9.5" height="8" fill="none" stroke="#d8d8d8" stroke-width="0.9"/><rect x="2.6" y="2.4" width="5.2" height="4.4" fill="none" stroke="#d8d8d8" stroke-width="0.8"/><path d="M3.6 4 H6.8 M3.6 5.4 H6.8" stroke="#d8d8d8" stroke-width="0.6"/></svg>
<svg class="abs" style="left:565px;top:443.5px" width="11" height="9" viewBox="0 0 11 9"><path d="M0.5 0.5 V8.5 H10.5 V0.5 M3.6 0.5 V5.4 H7.4 V0.5" fill="none" stroke="#d8d8d8" stroke-width="0.9"/></svg>
<div class="abs" style="left:588.5px;top:448px;width:5px;height:0.9px;background:#c8c8c8;"></div>
<div class="abs" style="left:598.5px;top:448px;width:70.5px;height:0.9px;background:#9a9a9a;"></div>
<div class="abs" style="left:632px;top:444px;width:3.6px;height:8.6px;background:#c4c4c4;"></div>
<svg class="abs" style="left:673px;top:445.5px" width="6" height="6" viewBox="0 0 6 6"><path d="M3 0 V6 M0 3 H6" stroke="#c8c8c8" stroke-width="0.9"/></svg>
<div class="t" style="left:688.50px;top:439px;font-size:8.6px;color:#f4f4f4;-webkit-text-stroke:0.15px #f4f4f4;transform:scaleX(0.818);">100%</div>
</body></html>
